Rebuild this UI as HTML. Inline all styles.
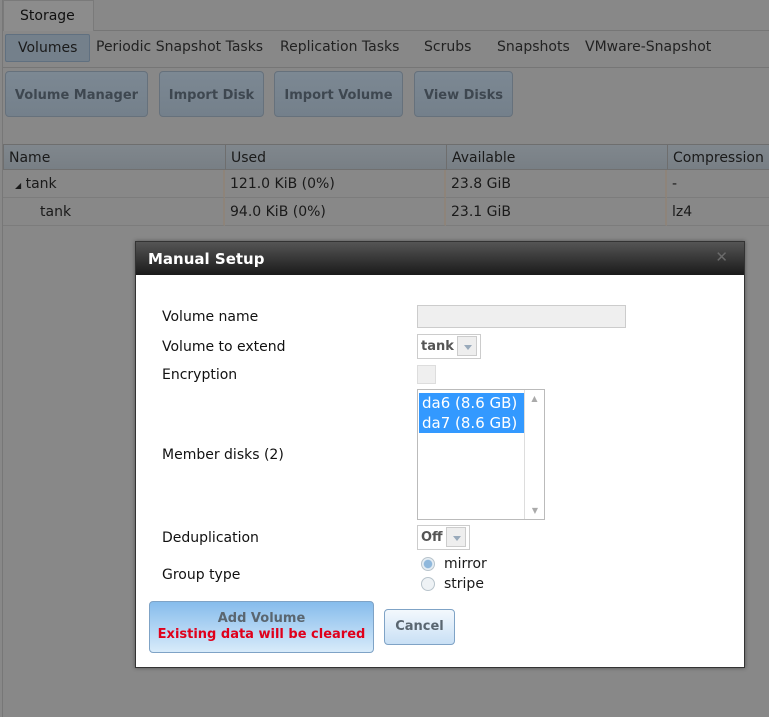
<!DOCTYPE html>
<html><head><style>
*{box-sizing:border-box;margin:0;padding:0}
body{width:769px;height:717px;overflow:hidden;background:#888888;font-family:"DejaVu Sans","Liberation Sans",sans-serif;font-size:14px;color:#1a1a1a;position:relative}
.abs{position:absolute}
.lv{left:2px;top:0;width:1px;height:717px;background:#777}
.tab{left:3px;top:0;width:91px;height:31px;border:1px solid #7a7a7a;border-bottom:none;background:#8c8c8c;padding:7px 0 0 16px;color:#111}
.hl{height:1px;background:#767676}
.sub{top:34px;left:5px;width:85px;height:28px;border:1px solid #607080;border-radius:2px;background:#74808b;padding:5px 0 0 12px}
.nav{top:39px;color:#222}
.btn{top:71px;height:46px;border:1px solid #66717c;border-radius:4px;background:linear-gradient(#7c8893,#74808b);font-weight:bold;font-size:13px;color:#3e4750;text-align:center;padding-top:16px}
.th{top:144px;height:26px;background:linear-gradient(#80878d,#787f85);border-top:1px solid #6e6e6e;border-bottom:1px solid #707070;padding:5px 0 0 5px;color:#1a1a1a}
.td{height:28px;padding:6px 0 0 5px;border-bottom:1px solid #7c7c7c;border-right:2px solid #8e847a}
.dlg{left:135px;top:241px;width:610px;height:427px;background:#fff;border:1px solid #333;box-shadow:0 0 4px rgba(0,0,0,.4)}
.title{left:0;top:0;width:608px;height:33px;background:linear-gradient(#555,#1a1a1a);color:#fff;font-weight:bold;font-size:15px;padding:8px 0 0 12px}
.lbl{left:26px;color:#111;top:0}
.sel{border:1px solid #ccc;background:#fff;font-weight:bold;font-size:13px;color:#555}
.arrow{position:absolute;top:1px;width:20px;height:20px;border:1px solid #ccc;background:#eee}
.arrow:after{content:"";position:absolute;left:6px;top:8px;border-left:4px solid transparent;border-right:4px solid transparent;border-top:5px solid #9ab}
.radio{width:14px;height:14px;border-radius:50%;border:1px solid #b8c4cc;background:#eef2f5}
</style></head><body>
<div class="abs lv"></div>
<div class="abs tab">Storage</div>
<div class="abs hl" style="left:94px;top:30px;width:675px"></div>
<div class="abs sub">Volumes</div>
<div class="abs nav" style="left:96px">Periodic Snapshot Tasks</div>
<div class="abs nav" style="left:280px">Replication Tasks</div>
<div class="abs nav" style="left:424px">Scrubs</div>
<div class="abs nav" style="left:497px">Snapshots</div>
<div class="abs nav" style="left:585px">VMware-Snapshot</div>
<div class="abs hl" style="left:3px;top:67px;width:766px"></div>
<div class="abs btn" style="left:5px;width:143px">Volume Manager</div>
<div class="abs btn" style="left:159px;width:105px">Import Disk</div>
<div class="abs btn" style="left:274px;width:129px">Import Volume</div>
<div class="abs btn" style="left:414px;width:99px">View Disks</div>
<div class="abs th" style="left:3px;width:222px;border-left:1px solid #6e6e6e">Name</div>
<div class="abs th" style="left:225px;width:221px;border-left:1px solid #6e6e6e">Used</div>
<div class="abs th" style="left:446px;width:221px;border-left:1px solid #6e6e6e">Available</div>
<div class="abs th" style="left:667px;width:102px;border-left:1px solid #6e6e6e">Compression</div>
<div class="abs td" style="left:3px;top:170px;width:222px;padding-left:12px"><span style="font-size:8px">◢</span> tank</div>
<div class="abs td" style="left:225px;top:170px;width:221px">121.0 KiB (0%)</div>
<div class="abs td" style="left:446px;top:170px;width:221px">23.8 GiB</div>
<div class="abs td" style="left:667px;top:170px;width:102px;border-right:none">-</div>
<div class="abs td" style="left:3px;top:198px;width:222px;padding-left:37px">tank</div>
<div class="abs td" style="left:225px;top:198px;width:221px">94.0 KiB (0%)</div>
<div class="abs td" style="left:446px;top:198px;width:221px">23.1 GiB</div>
<div class="abs td" style="left:667px;top:198px;width:102px;border-right:none">lz4</div>

<div class="abs dlg">
<div class="abs title">Manual Setup<span style="position:absolute;right:16px;top:6px;color:#6a6a6a;font-size:15px;font-weight:bold">✕</span></div>
<div class="abs lbl" style="top:67px">Volume name</div>
<div class="abs" style="left:281px;top:63px;width:209px;height:23px;border:1px solid #ccc;background:#efefef"></div>
<div class="abs lbl" style="top:97px">Volume to extend</div>
<div class="abs sel" style="left:281px;top:92px;width:64px;height:25px;padding:4px 0 0 3px">tank<div class="arrow" style="left:39px"></div></div>
<div class="abs lbl" style="top:125px">Encryption</div>
<div class="abs" style="left:281px;top:123px;width:19px;height:19px;border:1px solid #ddd;background:#efefef"></div>
<div class="abs" style="left:281px;top:147px;width:128px;height:131px;border:1px solid #bbb">
 <div style="margin:3px 0 0 1px;width:105px;background:#3399ff;color:#fff;font-size:15px;line-height:20px;padding-left:3px">da6 (8.6 GB)<br>da7 (8.6 GB)</div>
 <div style="position:absolute;right:0;top:0;width:20px;height:129px;border-left:1px solid #ddd;color:#aaa;font-size:8px;text-align:center;padding-top:4px">▲<div style="position:absolute;bottom:4px;width:20px">▼</div></div>
</div>
<div class="abs lbl" style="top:205px">Member disks (2)</div>
<div class="abs lbl" style="top:288px">Deduplication</div>
<div class="abs sel" style="left:281px;top:283px;width:53px;height:25px;padding:4px 0 0 3px">Off<div class="arrow" style="left:28px"></div></div>
<div class="abs lbl" style="top:325px">Group type</div>
<div class="abs radio" style="left:285px;top:315px;background:radial-gradient(#8fb8dc 45%,#e6eef4 55%)"></div>
<div class="abs" style="left:308px;top:314px">mirror</div>
<div class="abs radio" style="left:285px;top:335px"></div>
<div class="abs" style="left:308px;top:334px">stripe</div>
<div class="abs" style="left:13px;top:359px;width:225px;height:52px;border:1px solid #7fa3c6;border-radius:4px;background:linear-gradient(#86bcec,#d8ebfa);text-align:center;font-weight:bold;font-size:13px;padding-top:9px;line-height:16px"><span style="color:#5a6670">Add Volume</span><br><span style="color:#e0001b">Existing data will be cleared</span></div>
<div class="abs" style="left:248px;top:367px;width:71px;height:36px;border:1px solid #7fa3c6;border-radius:4px;background:linear-gradient(#f3f8fd,#c9e0f5);text-align:center;font-weight:bold;font-size:13px;color:#5a6670;padding-top:9px">Cancel</div>
</div>
</body></html>
